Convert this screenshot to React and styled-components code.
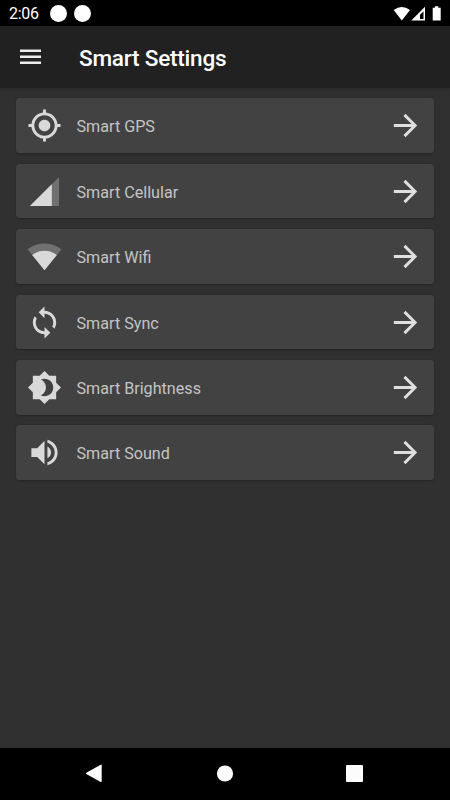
import React from 'react';
import styled, { createGlobalStyle } from 'styled-components';

const GlobalStyle = createGlobalStyle`
  * {
    box-sizing: border-box;
  }

  body {
    margin: 0;
    background: #303030;
    font-family: Roboto, 'Liberation Sans', sans-serif;
  }
`;

const Screen = styled.div`
  width: 450px;
  height: 800px;
  display: flex;
  flex-direction: column;
  overflow: hidden;
  background: #303030;
`;

const StatusBar = styled.div`
  height: 26px;
  flex-shrink: 0;
  display: flex;
  align-items: center;
  padding: 1px 8px 0 9px;
  background: #000;
`;

const Clock = styled.span`
  width: 41px;
  padding-top: 1px;
  color: #fff;
  font-size: 16px;
  letter-spacing: -0.3px;
  line-height: 24px;
`;

const Dot = styled.span`
  width: 17px;
  height: 17px;
  margin-right: 7px;
  border-radius: 50%;
  background: #fff;
`;

const StatusIcons = styled.svg`
  width: 50px;
  height: 16px;
  margin-left: auto;
`;

const AppBar = styled.header`
  height: 61.5px;
  flex-shrink: 0;
  display: flex;
  align-items: center;
  padding: 0 17px;
  background: #212121;
  box-shadow: 0 1px 3px rgba(0, 0, 0, 0.2);
  z-index: 1;
`;

const MenuIcon = styled.svg`
  width: 27px;
  height: 27px;
  fill: #ececec;
`;

const Title = styled.h1`
  margin: 4px 0 0 35px;
  color: #fff;
  font-size: 22.6px;
  font-weight: 500;
  letter-spacing: -0.25px;
  line-height: 30px;
`;

const List = styled.main`
  flex: 1;
  display: flex;
  flex-direction: column;
  gap: 10.95px;
  padding: 10.8px 16px 0;
`;

const Card = styled.div`
  height: 54.5px;
  display: flex;
  align-items: center;
  padding: 0.4px 11.5px 0 11px;
  border-radius: 3.5px;
  background: #424242;
  box-shadow: 0 0.5px 2px rgba(0, 0, 0, 0.25);
`;

const Icon = styled.svg`
  width: 35px;
  height: 35px;
  flex-shrink: 0;
  fill: ${props => props.$color || '#d9d9d9'};
`;

const Label = styled.span`
  flex: 1;
  padding: 3px 0 0 14.5px;
  color: #c4c4c4;
  font-size: 16.15px;
  line-height: 22px;
`;

const NavBar = styled.nav`
  height: 52px;
  flex-shrink: 0;
  display: flex;
  align-items: center;
  justify-content: space-between;
  padding: 0 86px 1px 85px;
  background: #000;
`;

const NavIcon = styled.svg`
  width: 19px;
  height: 19px;
  fill: #fcfcfc;
`;

const settings = [
  {
    label: 'Smart GPS',
    path:
      'M12 8c-2.21 0-4 1.79-4 4s1.79 4 4 4 4-1.79 4-4-1.79-4-4-4zm8.94 3c-.46-4.17-3.77-7.48-7.94-7.94V1h-2v2.06C6.83 3.52 3.52 6.83 3.06 11H1v2h2.06c.46 4.17 3.77 7.48 7.94 7.94V23h2v-2.06c4.17-.46 7.48-3.77 7.94-7.94H23v-2h-2.06zM12 19c-3.87 0-7-3.13-7-7s3.13-7 7-7 7 3.13 7 7-3.13 7-7 7z',
  },
  {
    label: 'Smart Cellular',
    faded: 'M2 22h20V2z',
    path: 'M17 7L2 22h15z',
  },
  {
    label: 'Smart Wifi',
    faded:
      'M23.64 7c-.45-.34-4.93-4-11.64-4C5.28 3 .81 6.66.36 7L12 21.5z',
    path:
      'M3.53 10.95L12 21.5l8.47-10.55C20.04 10.62 16.81 8 12 8s-8.04 2.62-8.47 2.95z',
  },
  {
    label: 'Smart Sync',
    path:
      'M12 4V1L8 5l4 4V6c3.31 0 6 2.69 6 6 0 1.01-.25 1.97-.7 2.8l1.46 1.46C19.54 15.03 20 13.57 20 12c0-4.42-3.58-8-8-8zm0 14c-3.31 0-6-2.69-6-6 0-1.01.25-1.97.7-2.8L5.24 7.74C4.46 8.97 4 10.43 4 12c0 4.42 3.58 8 8 8v3l4-4-4-4v3z',
  },
  {
    label: 'Smart Brightness',
    path:
      'M20 8.69V4h-4.69L12 .69 8.69 4H4v4.69L.69 12 4 15.31V20h4.69L12 23.31 15.31 20H20v-4.69L23.31 12 20 8.69zM12 18c-.89 0-1.74-.2-2.5-.55C11.56 16.5 13 14.42 13 12s-1.44-4.5-3.5-5.45C10.26 6.2 11.11 6 12 6c3.31 0 6 2.69 6 6s-2.69 6-6 6z',
  },
  {
    label: 'Smart Sound',
    path:
      'M3 9v6h4l5 5V4L7 9H3zm13.5 3c0-1.77-1.02-3.29-2.5-4.03v8.05c1.48-.73 2.5-2.25 2.5-4.02zM14 3.23v2.06c2.89.86 5 3.54 5 6.71s-2.11 5.85-5 6.71v2.06c4.01-.91 7-4.49 7-8.77s-2.99-7.86-7-8.77z',
  },
];

const SettingCard = ({ label, path, faded }) => (
  <Card>
    <Icon viewBox="0 0 24 24">
      {faded && <path d={faded} fillOpacity=".3" />}
      <path d={path} />
    </Icon>
    <Label>{label}</Label>
    <Icon viewBox="0 0 24 24" $color="#dfdfdf">
      <path d="M12 4l-1.41 1.41L16.17 11H4v2h12.17l-5.58 5.59L12 20l8-8z" />
    </Icon>
  </Card>
);

const App = () => (
  <>
    <GlobalStyle />
    <Screen>
      <StatusBar>
        <Clock>2:06</Clock>
        <Dot />
        <Dot />
        <StatusIcons viewBox="0 0 50 16" fill="#fff">
          <path d="M1.7 4.1Q9.8-2.3 18 4.1L9.8 14.5z" />
          <path d="M19.3 14.5L33 .8v13.7zM28 12.900h3.5V5.2L28 8.8z" fillRule="evenodd" />
          <path d="M42.9.3h3.4v1.5h2.4v12.7h-8V1.8h2.2z" />
        </StatusIcons>
      </StatusBar>
      <AppBar>
        <MenuIcon viewBox="0 0 27 27">
          <path d="M3 6.4h21v2.5H3zM3 12.4h21v2.5H3zM3 18.4h21v2.5H3z" />
        </MenuIcon>
        <Title>Smart Settings</Title>
      </AppBar>
      <List>
        {settings.map(setting => (
          <SettingCard key={setting.label} {...setting} />
        ))}
      </List>
      <NavBar>
        <NavIcon viewBox="0 0 19 19">
          <path d="M1.3 8.7L15.7.7q1-.5 1 .6v16q0 1.1-1 .6L1.3 9.9q-.9-.6 0-1.2z" />
        </NavIcon>
        <NavIcon viewBox="0 0 19 19">
          <circle cx="10" cy="9.5" r="8.1" />
        </NavIcon>
        <NavIcon viewBox="0 0 19 19">
          <rect x="1" y="1" width="17" height="17" rx="1" />
        </NavIcon>
      </NavBar>
    </Screen>
  </>
);

export default App;
